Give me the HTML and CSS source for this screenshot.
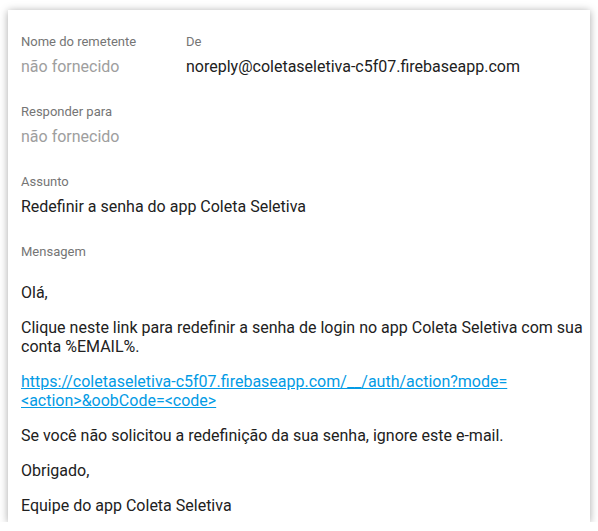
FILE: index.html
```html
<!DOCTYPE html>
<html lang="pt">
<head>
<meta charset="utf-8">
<link rel="stylesheet" href="styles.css">
</head>
<body>
<div class="card">
  <div class="row">
    <div class="field col-name">
      <div class="label">Nome do remetente</div>
      <div class="value muted">não fornecido</div>
    </div>
    <div class="field">
      <div class="label">De</div>
      <div class="value">noreply@coletaseletiva-c5f07.firebaseapp.com</div>
    </div>
  </div>
  <div class="field">
    <div class="label">Responder para</div>
    <div class="value muted">não fornecido</div>
  </div>
  <div class="field">
    <div class="label">Assunto</div>
    <div class="value">Redefinir a senha do app Coleta Seletiva</div>
  </div>
  <div class="field message">
    <div class="label">Mensagem</div>
    <div class="body">
      <p>Olá,</p>
      <p>Clique neste link para redefinir a senha de login no app Coleta Seletiva com sua conta %EMAIL%.</p>
      <p><a class="link" href="#">https://coletaseletiva-c5f07.firebaseapp.com/__/auth/action?mode=&lt;action&gt;&amp;oobCode=&lt;code&gt;</a></p>
      <p>Se você não solicitou a redefinição da sua senha, ignore este e-mail.</p>
      <p>Obrigado,</p>
      <p>Equipe do app Coleta Seletiva</p>
    </div>
  </div>
</div>
</body>
</html>
```

FILE: styles.css
```css
html, body {
  margin: 0;
  padding: 0;
  background: #ffffff;
}
body {
  font-family: Roboto, "Liberation Sans", sans-serif;
  color: #212121;
}
.card {
  margin: 10px 0 0 8px;
  width: 582px;
  height: 512px;
  box-sizing: border-box;
  background: #ffffff;
  box-shadow: 0 1px 8px rgba(0, 0, 0, 0.35);
  padding: 24px 0 0 13px;
  overflow: hidden;
}
.row {
  display: flex;
}
.col-name {
  width: 165px;
  flex: none;
}
.field {
  margin-bottom: 27px;
}
.label {
  font-size: 13px;
  line-height: 16px;
  color: #757575;
  margin-bottom: 7px;
}
.value {
  font-size: 16px;
  line-height: 20px;
  color: #212121;
}
.value.muted {
  color: #9e9e9e;
}
.message .label {
  margin-bottom: 0;
}
.body {
  padding-top: 23px;
  font-size: 16px;
  line-height: 19px;
  color: #212121;
  width: 565px;
}
.body p {
  margin: 0 0 16px 0;
}
.link {
  color: #039be5;
  text-decoration: underline;
}
```
